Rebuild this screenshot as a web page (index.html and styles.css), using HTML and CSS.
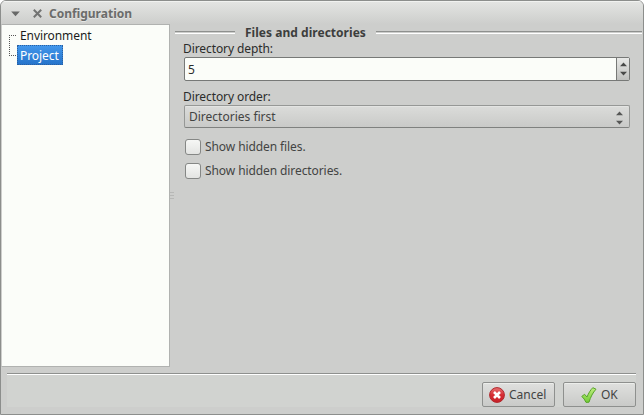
FILE: index.html
```html
<!DOCTYPE html>
<html lang="en">
<head>
<meta charset="utf-8">
<title>Configuration</title>
<link rel="stylesheet" href="styles.css">
</head>
<body>
<div class="window">
  <header class="titlebar">
    <svg class="title-menu" width="9" height="6" viewBox="0 0 9 6"><path d="M.2 .5h8.600L4.500 5.200z" fill="#686968"/></svg>
    <svg class="title-close" width="9" height="9" viewBox="0 0 9 9"><path d="M.8 .8l7.400 7.400M8.200 .8l-7.400 7.400" stroke="#727372" stroke-width="2"/></svg>
    <h1>Configuration</h1>
  </header>
  <main class="body">
    <nav class="tree">
      <svg class="branches" width="12" height="22" viewBox="0 0 12 22"><path d="M0 .5h8M.5 2v19M2 20.500h6" fill="none" stroke="#555" stroke-dasharray="1 1" shape-rendering="crispEdges"/></svg>
      <ul>
        <li><span>Environment</span></li>
        <li><span class="selected">Project</span></li>
      </ul>
    </nav>
    <div class="splitter"><i></i><i></i><i></i></div>
    <section class="panel">
      <div class="heading"><hr class="rule-left"><h2>Files and directories</h2><hr class="rule-right"></div>
      <form class="form">
        <label class="caption">Directory depth:</label>
        <div class="spin">
          <span class="value">5</span>
          <span class="steps">
            <svg width="7" height="14" viewBox="0 0 7 14"><path d="M0 4.200L3.500 .5 7 4.200zM0 9.800L3.500 13.500 7 9.800z" fill="#484948"/></svg>
          </span>
        </div>
        <label class="caption order">Directory order:</label>
        <div class="select">
          <span>Directories first</span>
          <svg width="7" height="14" viewBox="0 0 7 14"><path d="M0 4.200L3.500 .5 7 4.200zM0 9.800L3.500 13.500 7 9.800z" fill="#565756"/></svg>
        </div>
        <label class="check"><i></i>Show hidden files.</label>
        <label class="check"><i></i>Show hidden directories.</label>
      </form>
    </section>
  </main>
  <footer class="actions">
    <button type="button">
      <svg width="16" height="16" viewBox="0 0 16 16">
        <defs><linearGradient id="red" x2="0" y2="1"><stop stop-color="#e77374"/><stop offset=".5" stop-color="#d62c32"/><stop offset="1" stop-color="#c72128"/></linearGradient></defs>
        <circle cx="8" cy="8" r="7.400" fill="url(#red)" stroke="#b0282d"/>
        <path d="M5 5l6 6M11 5l-6 6" stroke="#fff" stroke-width="2.600"/>
      </svg>Cancel
    </button>
    <button type="button" class="ok">
      <svg width="16" height="16" viewBox="0 0 16 16">
        <defs><linearGradient id="green" x2="0" y2="1"><stop stop-color="#c0ee80"/><stop offset="1" stop-color="#72cc36"/></linearGradient></defs>
        <path d="M.8 9.400L3.600 7.300 6 10C7.500 6.300 9.400 3 11.800 .7L15 2.200C11.800 5.700 9.600 10 8 15.200L5 15.400C4 13 2.600 11 .8 9.400z" fill="url(#green)" stroke="#57a32a" stroke-linejoin="round"/>
      </svg>OK
    </button>
  </footer>
</div>
</body>
</html>
```

FILE: styles.css
```css
* { box-sizing: border-box; }
html { background: #fff; }
body { margin: 0; font: 12px/16px "Noto Sans", sans-serif; color: #2b2c2b; }
h1, h2, ul { margin: 0; padding: 0; font-size: 12px; }
svg { display: block; flex: none; }

.window {
  width: 644px; height: 415px;
  display: flex; flex-direction: column;
  border: 1px solid #8c8e8c; border-radius: 6px 6px 0 0;
  background: #cdcecc; overflow: hidden;
}
.titlebar {
  height: 23px; flex: none; display: flex; align-items: center;
  padding: 2px 0 0 10px;
  background: linear-gradient(#e4e5e3, #cdcecc);
  box-shadow: inset 0 1px #f1f2f0;
}
.title-close { margin: 0 7px 0 13px; }
h1 { line-height: 16px; color: #6b6c6b; text-shadow: 0 1px #e6e7e5; }

.body { height: 343px; flex: none; display: flex; }
.tree {
  width: 169px; flex: none; display: flex; align-items: flex-start;
  background: #fbfdf9; border: 1px solid #b0b2b0; border-left-color: #cdcecc;
  padding: 0 0 0 7px; letter-spacing: -.08px;
}
.branches { margin-top: 10px; }
.tree ul { list-style: none; font-weight: normal; margin-left: -4px; }
.tree li { height: 20px; display: flex; }
.tree span { height: 20px; line-height: 22px; padding: 0 3px; color: #1c1d1c; }
.tree .selected {
  padding-right: 4px;
  background: linear-gradient(#4398ec, #2573ca);
  outline: 1px dotted #2b60a0; outline-offset: -1px; color: #fff;
}
.splitter { width: 5px; flex: none; padding-top: 168px; }
.splitter i { display: block; width: 4px; height: 1px; background: #b7b8b6; margin-bottom: 2px; }

.panel { flex: 1; padding-right: 1px; }
.heading { display: flex; height: 17px; }
.heading hr { margin: 7px 0 0; height: 3px; border: 0; border-top: 1px solid #8e908e; border-bottom: 1px solid #fff; }
.rule-left { width: 60px; }
.rule-right { flex: 1; }
h2 { margin: 0 10px; line-height: 17px; color: #3d3e3d; letter-spacing: .03px; }
.form { padding: 0 12px 0 9px; display: flex; flex-direction: column; letter-spacing: -.09px; }
.caption { height: 16px; margin-left: -1px; }
.order { margin-top: 8px; }
.spin {
  height: 24px; display: flex; justify-content: space-between;
  border: 1px solid #777977; border-radius: 2px; background: #fbfdf9;
}
.value { padding-left: 3px; line-height: 23px; }
.steps {
  width: 13px; display: flex; align-items: center; justify-content: center;
  border-left: 1px solid #777977; background: linear-gradient(#e8e9e7, #bfc0be);
}
.select {
  height: 23px; display: flex; align-items: center; justify-content: space-between;
  padding: 0 6px 0 4px; border: 1px solid #969896; border-bottom-color: #7f817f;
  border-radius: 2px; background: linear-gradient(#dbdcda, #c9cac8);
  box-shadow: inset 0 1px #e3e4e2; color: #434443; letter-spacing: 0;
}
.select svg { margin-top: 3px; }
.check { height: 24px; display: flex; align-items: center; color: #434443; }
.select + .check { margin-top: 7px; }
.check i {
  width: 16px; height: 16px; margin: 0 4px 0 1px;
  border: 1px solid #858785; border-radius: 3px;
  background: linear-gradient(#f6f7f5, #e3e4e2);
}

.actions {
  flex: none; height: 34px; margin: 6px 7px 0 6px; padding-top: 8px;
  display: flex; justify-content: flex-end; gap: 8px;
  border-top: 1px solid #8e908e; box-shadow: inset 0 1px #fff;
  background: #d1d3d0;
}
button {
  width: 73px; height: 25px; padding: 0 0 0 6px;
  display: flex; align-items: center; gap: 4px;
  border: 1px solid #8e908e; border-radius: 2px;
  background: linear-gradient(#dfe0de, #c9cac8);
  box-shadow: inset 0 1px #eceeeb;
  font: inherit; color: #434443;
}
.ok { padding-left: 17px; }
```
